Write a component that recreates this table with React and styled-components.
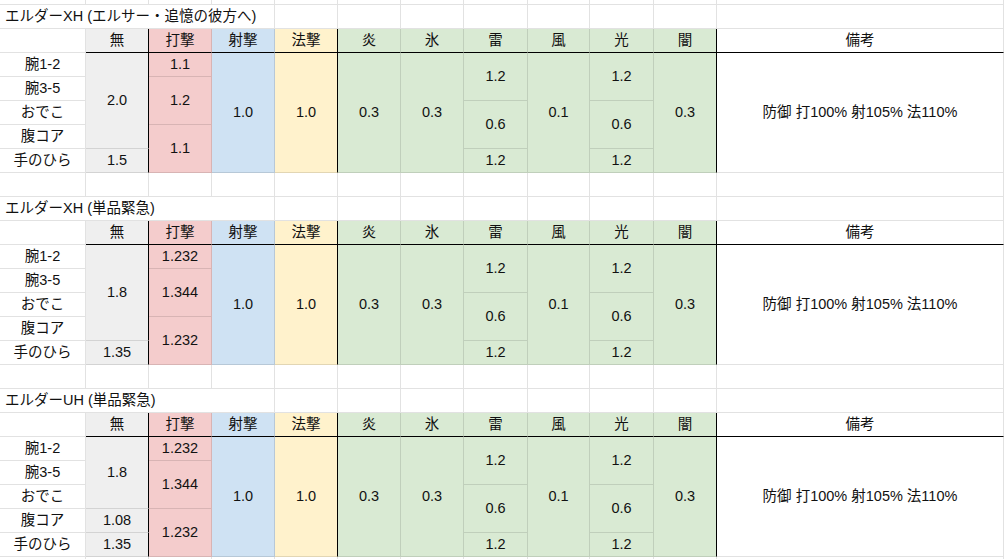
import styled, { createGlobalStyle } from "styled-components";

const GlobalStyle = createGlobalStyle`
    html, body {
        margin: 0;
        padding: 0;
        background: #fff;
        height: 559px;
        overflow: hidden;
    }
`;

const COLS = "86px 63px 63px 63px 63px 63px 63px 64px 62px 64px 63px 287px";
const GREEN = "#d9ead3";

const columns = [
    { name: "無", bg: "#efefef", black: true },
    { name: "打撃", bg: "#f4cccc" },
    { name: "射撃", bg: "#cfe2f3" },
    { name: "法撃", bg: "#fff2cc", black: true },
    { name: "炎", bg: GREEN },
    { name: "氷", bg: GREEN },
    { name: "雷", bg: GREEN },
    { name: "風", bg: GREEN },
    { name: "光", bg: GREEN },
    { name: "闇", bg: GREEN, black: true },
    { name: "備考", bg: "#ffffff" },
];

const parts = ["腕1-2", "腕3-5", "おでこ", "腹コア", "手のひら"];

const common = [
    [[5, "1.0"]],
    [[5, "1.0"]],
    [[5, "0.3"]],
    [[5, "0.3"]],
    [[2, "1.2"], [2, "0.6"], [1, "1.2"]],
    [[5, "0.1"]],
    [[2, "1.2"], [2, "0.6"], [1, "1.2"]],
    [[5, "0.3"]],
    [[5, "防御 打100% 射105% 法110%"]],
];

const tables = [
    {
        title: "エルダーXH (エルサー・追憶の彼方へ)",
        data: [
            [[4, "2.0"], [1, "1.5"]],
            [[1, "1.1"], [2, "1.2"], [2, "1.1"]],
            ...common,
        ],
    },
    {
        title: "エルダーXH (単品緊急)",
        data: [
            [[4, "1.8"], [1, "1.35"]],
            [[1, "1.232"], [2, "1.344"], [2, "1.232"]],
            ...common,
        ],
    },
    {
        title: "エルダーUH (単品緊急)",
        data: [
            [[3, "1.8"], [1, "1.08"], [1, "1.35"]],
            [[1, "1.232"], [2, "1.344"], [2, "1.232"]],
            ...common,
        ],
    },
];

const Sheet = styled.div`
    width: 1004px;
    display: flex;
    flex-direction: column;
    font-family: "Liberation Sans", Arial, "Noto Sans CJK JP", sans-serif;
    font-size: 14.5px;
    color: #111;
`;

const Grid = styled.div`
    display: grid;
    grid-template-columns: ${COLS};
    grid-auto-rows: ${p => p.$rowHeight || 24}px;
`;

const line = (black) => (black ? "#000" : "rgba(0, 0, 0, 0.115)");

const Cell = styled.div`
    box-sizing: border-box;
    grid-column: ${p => p.$col} / span ${p => p.$colSpan || 1};
    grid-row: ${p => p.$row} / span ${p => p.$span || 1};
    background: ${p => p.$bg || "#fff"};
    border-right: 1px solid ${p => line(p.$rightBlack)};
    border-bottom: 1px solid ${p => line(p.$bottomBlack)};
    display: flex;
    align-items: center;
    justify-content: ${p => (p.$left ? "flex-start" : "center")};
    padding-left: ${p => (p.$left ? "5px" : "0")};
    white-space: nowrap;
    overflow: hidden;
    line-height: 1;
`;

const BlankRow = ({ row }) =>
    Array.from({ length: 12 }, (_, i) => (
        <Cell key={`b${row}-${i}`} $col={i + 1} $row={row} />
    ));

const Table = ({ title, data }) => (
    <Grid>
        <Cell $col={1} $colSpan={4} $row={1} $left>
            {title}
        </Cell>
        {columns.slice(3).map((c, i) => (
            <Cell key={`t${i}`} $col={i + 5} $row={1} />
        ))}

        <Cell $col={1} $row={2} />
        {columns.map((c, i) => (
            <Cell
                key={`h${i}`}
                $col={i + 2}
                $row={2}
                $bg={c.bg}
                $rightBlack={c.black}
                $bottomBlack
            >
                {c.name}
            </Cell>
        ))}

        {parts.map((p, i) => (
            <Cell key={`p${i}`} $col={1} $row={i + 3}>
                {p}
            </Cell>
        ))}

        {data.map((segs, ci) => {
            let row = 3;
            return segs.map(([span, value], si) => {
                const start = row;
                row += span;
                return (
                    <Cell
                        key={`d${ci}-${si}`}
                        $col={ci + 2}
                        $row={start}
                        $span={span}
                        $bg={columns[ci].bg}
                        $rightBlack={columns[ci].black}
                    >
                        {value}
                    </Cell>
                );
            });
        })}

        <BlankRow row={8} />
    </Grid>
);

export default function App() {
    return (
        <>
            <GlobalStyle />
            <Sheet>
                <Grid $rowHeight={5}>
                    <BlankRow row={1} />
                </Grid>
                {tables.map((t, i) => (
                    <Table key={i} title={t.title} data={t.data} />
                ))}
            </Sheet>
        </>
    );
}
